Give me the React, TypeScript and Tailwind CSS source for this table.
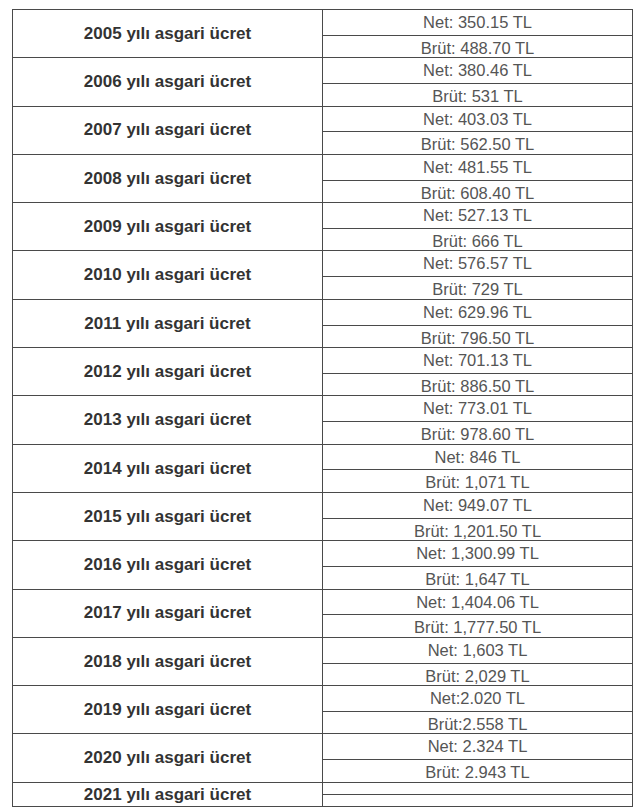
import React from "react";

const rows: [string, string, string][] = [
  ["2005", "Net: 350.15 TL", "Brüt: 488.70 TL"],
  ["2006", "Net: 380.46 TL", "Brüt: 531 TL"],
  ["2007", "Net: 403.03 TL", "Brüt: 562.50 TL"],
  ["2008", "Net: 481.55 TL", "Brüt: 608.40 TL"],
  ["2009", "Net: 527.13 TL", "Brüt: 666 TL"],
  ["2010", "Net: 576.57 TL", "Brüt: 729 TL"],
  ["2011", "Net: 629.96 TL", "Brüt: 796.50 TL"],
  ["2012", "Net: 701.13 TL", "Brüt: 886.50 TL"],
  ["2013", "Net: 773.01 TL", "Brüt: 978.60 TL"],
  ["2014", "Net: 846 TL", "Brüt: 1,071 TL"],
  ["2015", "Net: 949.07 TL", "Brüt: 1,201.50 TL"],
  ["2016", "Net: 1,300.99 TL", "Brüt: 1,647 TL"],
  ["2017", "Net: 1,404.06 TL", "Brüt: 1,777.50 TL"],
  ["2018", "Net: 1,603 TL", "Brüt: 2,029 TL"],
  ["2019", "Net:2.020 TL", "Brüt:2.558 TL"],
  ["2020", "Net: 2.324 TL", "Brüt: 2.943 TL"],
];

export default function App() {
  return (
    <div className="w-[640px] h-[812px] bg-white pt-[9px] pl-[12px]" style={{ fontFamily: '"Liberation Sans", Arial, sans-serif' }}>
      <div className="w-[621px] border border-[#4a4a4a]">
        {rows.map(([year, net, brut]) => (
          <div key={year} className="flex h-[48.3px] border-b border-[#4a4a4a]">
            <div className="w-[310px] shrink-0 border-r border-[#4a4a4a] flex items-center justify-center text-[17px] font-bold text-[#333]">
              {year} yılı asgari ücret
            </div>
            <div className="flex-1 flex flex-col text-[16.5px] text-[#555]">
              <div className="flex-1 flex items-center justify-center border-b border-[#4a4a4a]">{net}</div>
              <div className="flex-1 flex items-center justify-center">{brut}</div>
            </div>
          </div>
        ))}
        <div className="flex h-[23px]">
          <div className="w-[310px] shrink-0 border-r border-[#4a4a4a] flex items-center justify-center text-[17px] font-bold text-[#333]">
            2021 yılı asgari ücret
          </div>
          <div className="flex-1 flex flex-col">
            <div className="flex-1 border-b border-[#4a4a4a]"></div>
            <div className="flex-1"></div>
          </div>
        </div>
      </div>
    </div>
  );
}
